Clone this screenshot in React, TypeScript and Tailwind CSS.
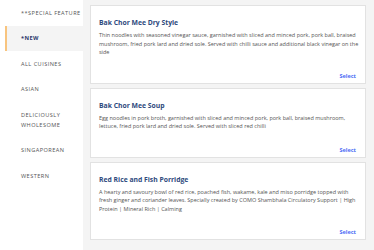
import React from 'react';

const categories = [
  { label: '**SPECIAL FEATURE' },
  { label: '*NEW', active: true },
  { label: 'ALL CUISINES' },
  { label: 'ASIAN' },
  { label: 'DELICIOUSLY WHOLESOME', twoLine: true },
  { label: 'SINGAPOREAN' },
  { label: 'WESTERN' },
];

const dishes = [
  {
    name: 'Bak Chor Mee Dry Style',
    desc: 'Thin noodles with seasoned vinegar sauce, garnished with sliced and minced pork, pork ball, braised mushroom, fried pork lard and dried sole. Served with chilli sauce and additional black vinegar on the side',
  },
  {
    name: 'Bak Chor Mee Soup',
    desc: 'Egg noodles in pork broth, garnished with sliced and minced pork, pork ball, braised mushroom, lettuce, fried pork lard and dried sole. Served with sliced red chilli',
  },
  {
    name: 'Red Rice and Fish Porridge',
    desc: 'A hearty and savoury bowl of red rice, poached fish, wakame, kale and miso porridge topped with fresh ginger and coriander leaves. Specially created by COMO Shambhala Circulatory Support | High Protein | Mineral Rich | Calming',
  },
];

export default function App() {
  return (
    <div className="flex w-[374px] h-[250px] overflow-hidden bg-[#f4f4f4]" style={{ fontFamily: '"Open Sans", Lato, sans-serif' }}>
      {/* categories */}
      <aside className="w-[83px] shrink-0 bg-white pl-[5px]">
        {categories.map((c) => (
          <div
            key={c.label}
            className={`py-[7.75px] pl-[14px] text-[5.6px] leading-[10px] tracking-[0.45px] uppercase ${
              c.active
                ? 'border-l-2 border-[#f8c47e] bg-[#f4f4f4] font-bold text-[#2c3a6c]'
                : 'pl-[16px] text-[#555]'
            } ${c.twoLine ? 'w-[68px]' : 'whitespace-nowrap'}`}
          >
            {c.label}
          </div>
        ))}
      </aside>

      {/* dish list */}
      <main className="flex-1 flex flex-col gap-[4px] pt-[5px] pl-[7px] pr-[8px]">
        {dishes.map((d) => (
          <div key={d.name} className="bg-white border border-[#e2e2e2] pt-[12px] pb-[3px] pl-[8px] pr-[5px]">
            <h3 className="text-[6.8px] leading-[9px] font-bold text-[#2e4a7d]">{d.name}</h3>
            <p className="mt-[4px] text-[5.5px] leading-[8.5px] text-[#555]">{d.desc}</p>
            <div className="mt-[15px] pr-[4px] text-right text-[5.5px] leading-[8px] font-bold text-[#4b6ef5]">Select</div>
          </div>
        ))}
      </main>
    </div>
  );
}
